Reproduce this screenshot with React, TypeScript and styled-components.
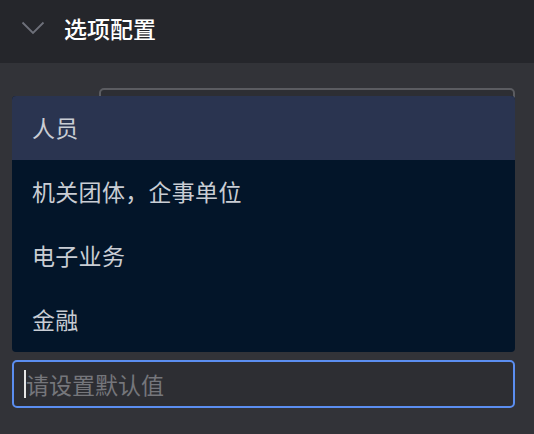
import React from "react";
import styled, { createGlobalStyle } from "styled-components";

const Global = createGlobalStyle`
  html, body { margin: 0; padding: 0; background: #323338; }
  body { font-family: "Noto Sans CJK SC", "Noto Sans", sans-serif; }
  * { box-sizing: border-box; }
`;

const Page = styled.div`
  width: 534px;
  height: 434px;
  background: #323338;
  display: flex;
  flex-direction: column;
  overflow: hidden;
`;

const Header = styled.div`
  height: 63px;
  background: #25262b;
  display: flex;
  align-items: center;
  padding: 0 0 7px 21px;
  gap: 19px;
  flex-shrink: 0;
`;

const Title = styled.span`
  color: #ffffff;
  font-size: 23px;
  font-weight: 500;
`;

const Body = styled.div`
  display: flex;
  flex-direction: column;
  padding: 25px 19px 0 12px;
`;

const FieldRow = styled.div`
  position: relative;
  display: flex;
  padding-left: 87px;
`;

const SelectBox = styled.div`
  flex: 1;
  height: 48px;
  border: 2px solid #5b5c61;
  border-radius: 5px;
  background: #2d2e33;
`;

const Menu = styled.ul`
  position: absolute;
  top: 8px;
  left: 0;
  right: 0;
  margin: 0;
  padding: 0;
  list-style: none;
  background: #031529;
  border-radius: 4px;
  overflow: hidden;
  z-index: 2;
`;

const MenuItem = styled.li<{ $active?: boolean }>`
  height: 64px;
  display: flex;
  align-items: center;
  padding: 0 0 3px 20px;
  font-size: 23px;
  letter-spacing: 0.3px;
  color: #c9cdd4;
  background: ${(p) => (p.$active ? "#2a3450" : "transparent")};
`;

const InputBox = styled.div`
  margin-top: 224px;
  height: 48px;
  border: 2px solid #5b8ef0;
  border-radius: 5px;
  background: #2d2e33;
  display: flex;
  align-items: center;
  padding-left: 10px;
`;

const Caret = styled.span`
  width: 2px;
  height: 28px;
  background: #e6e6e6;
`;

const Placeholder = styled.span`
  font-size: 23px;
  color: #75767b;
`;

const Chevron = () => (
  <svg width="24" height="14" viewBox="0 0 24 14" fill="none">
    <path d="M1.5 1.5 L12 12 L22.5 1.5" stroke="#6e707a" strokeWidth="1.8" />
  </svg>
);

const options = ["人员", "机关团体，企事单位", "电子业务", "金融"];

export default function App() {
  return (
    <Page>
      <Global />
      <Header>
        <Chevron />
        <Title>选项配置</Title>
      </Header>
      <Body>
        <FieldRow>
          <SelectBox />
          <Menu>
            {options.map((o, i) => (
              <MenuItem key={o} $active={i === 0}>
                {o}
              </MenuItem>
            ))}
          </Menu>
        </FieldRow>
        <InputBox>
          <Caret />
          <Placeholder>请设置默认值</Placeholder>
        </InputBox>
      </Body>
    </Page>
  );
}
